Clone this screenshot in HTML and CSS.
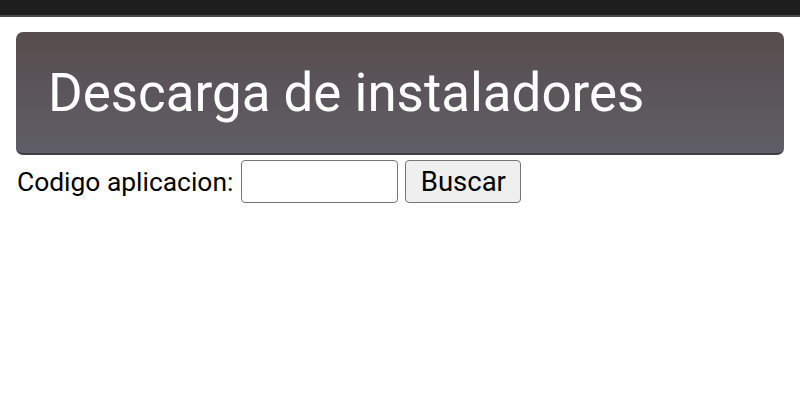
FILE: index.html
```html
<!DOCTYPE html>
<html lang="es">
<head>
<meta charset="utf-8">
<title>Descarga de instaladores</title>
<link rel="stylesheet" href="styles.css">
</head>
<body>
<div class="topbar"></div>
<main class="page">
  <header class="banner">
    <h1 class="banner-title">Descarga de instaladores</h1>
  </header>
  <form class="search" onsubmit="return false;">
    <label class="search-label" for="codigo">Codigo aplicacion:</label>
    <input class="search-input" id="codigo" type="text">
    <button class="search-button" type="submit">Buscar</button>
  </form>
</main>
</body>
</html>
```
FILE: styles.css
```css
html, body {
  margin: 0;
  padding: 0;
  background: #ffffff;
}
body {
  font-family: Roboto, "Liberation Sans", sans-serif;
  color: #000000;
}
.topbar {
  height: 15px;
  background: #1e1e1e;
  border-bottom: 2px solid #4a4a4a;
}
.page {
  padding: 15px 16px 0 16px;
}
.banner {
  height: 123px;
  background: linear-gradient(to bottom, #574d4e 0%, #5f5e66 100%);
  border-radius: 7px;
  border-bottom: 2px solid #3e3e42;
  box-sizing: border-box;
  display: flex;
  align-items: center;
  padding-left: 32px;
}
.banner-title {
  margin: 0;
  font-weight: 400;
  font-size: 52.9px;
  color: #ffffff;
  line-height: 1;
  padding-top: 1px;
}
.search {
  display: flex;
  align-items: center;
  margin-top: 5px;
  height: 43px;
}
.search-label {
  font-size: 26.4px;
  margin-left: 1px;
  margin-right: 8px;
}
.search-input {
  width: 157px;
  height: 43px;
  box-sizing: border-box;
  border: 1px solid #767676;
  border-radius: 4px;
  margin: 0 7px 0 0;
  padding: 0 4px;
  font-size: 26px;
  font-family: inherit;
}
.search-button {
  width: 116px;
  height: 43px;
  box-sizing: border-box;
  border: 1px solid #767676;
  border-radius: 4px;
  background: #efefef;
  font-size: 27.5px;
  font-family: inherit;
  color: #000000;
  padding: 0;
  margin: 0;
}
```
